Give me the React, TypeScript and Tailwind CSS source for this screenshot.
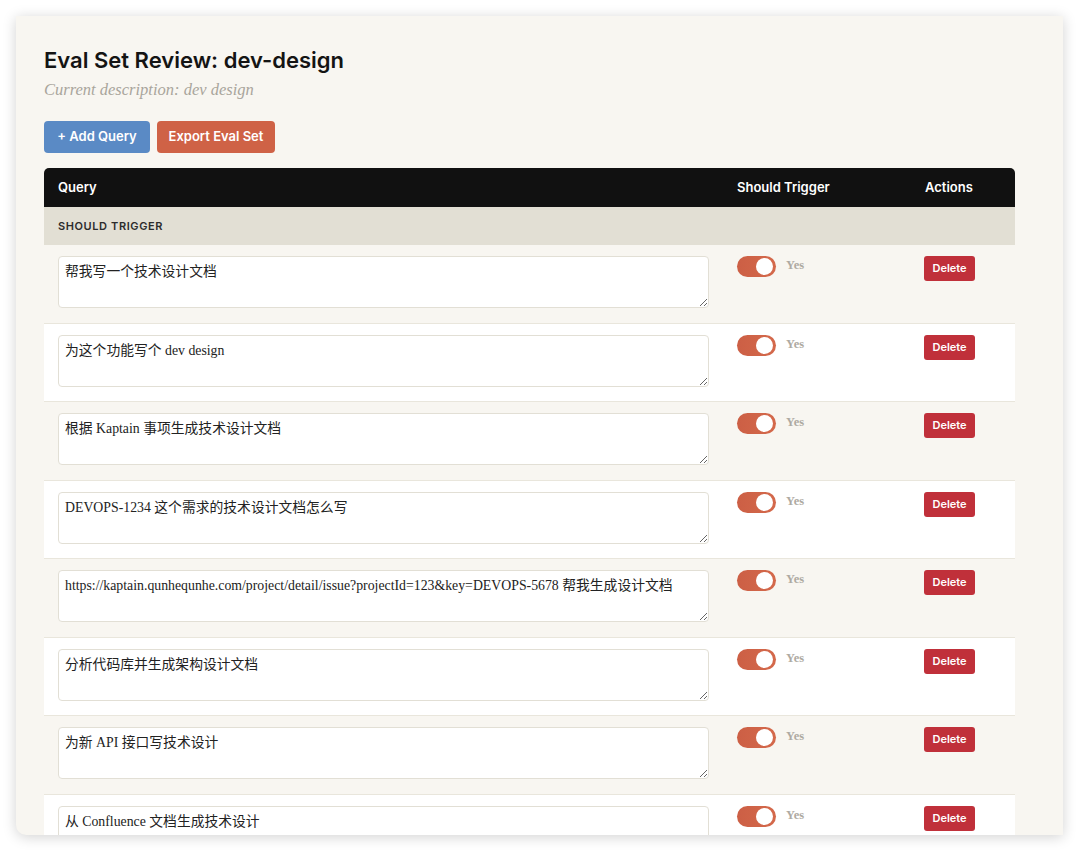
const queries = [
  "帮我写一个技术设计文档",
  "为这个功能写个 dev design",
  "根据 Kaptain 事项生成技术设计文档",
  "DEVOPS-1234 这个需求的技术设计文档怎么写",
  "https://kaptain.qunhequnhe.com/project/detail/issue?projectId=123&key=DEVOPS-5678 帮我生成设计文档",
  "分析代码库并生成架构设计文档",
  "为新 API 接口写技术设计",
  "从 Confluence 文档生成技术设计",
];

const sans = "font-['Inter','Noto_Sans',sans-serif]";
const serif = "font-['Liberation_Serif','Noto_Sans_CJK_SC',serif]";

function Toggle() {
  return (
    <div className="flex items-center gap-[10px]">
      <div className="relative w-[39px] h-[21px] rounded-full bg-gradient-to-r from-[#cc5f45] to-[#d4694b]">
        <div className="absolute right-[3px] top-[2px] w-[17px] h-[17px] rounded-full bg-white" />
      </div>
      <span className={`${serif} text-[12.5px] font-bold text-[#aeaaa2] -mt-[2px]`}>Yes</span>
    </div>
  );
}

function Row({ text, index }: { text: string; index: number }) {
  return (
    <div
      className={`flex border-b border-[#e9e6dc] ${index % 2 === 0 ? "bg-[#f8f6f1]" : "bg-white"}`}
    >
      <div className="w-[679px] pl-[14px] pr-[14px] pt-[11px] pb-[14.5px]">
        <textarea
          readOnly
          defaultValue={text}
          className={`${serif} block w-[651px] h-[52px] rounded-[4px] border border-[#e2dfd5] bg-white px-[6px] py-[5px] text-[13.8px] leading-[20px] text-[#222] resize-y outline-none`}
        />
      </div>
      <div className="w-[188px] pl-[14px] pt-[11px]">
        <Toggle />
      </div>
      <div className="w-[104px] pl-[13px] pt-[11px]">
        <button
          className={`${sans} block w-[51px] h-[25px] rounded-[3px] bg-[#c0303a] text-white text-[11px] font-semibold`}
        >
          Delete
        </button>
      </div>
    </div>
  );
}

export default function App() {
  return (
    <div className="w-[1080px] h-[851px] bg-white pl-[16px] pt-[16px]">
      <div className="relative w-[1047px] h-[819px] overflow-hidden bg-[#f8f6f1] shadow-[0_2px_14px_rgba(0,0,0,0.18)] rounded-bl-[10px] pl-[28px] pt-[28px]">
        <h1 className={`${sans} text-[22px] leading-[32px] font-semibold text-[#141414]`}>
          Eval Set Review: dev-design
        </h1>
        <p className={`${serif} italic text-[16.5px] leading-[22px] mt-[3px] text-[#a9a59c]`}>
          Current description: dev design
        </p>
        <div className="flex gap-[7px] mt-[20px]">
          <button
            className={`${sans} h-[32px] w-[106px] rounded-[4px] bg-[#5a8ac5] text-white text-[13px] font-semibold`}
          >
            + Add Query
          </button>
          <button
            className={`${sans} h-[32px] w-[118px] rounded-[4px] bg-[#cf6246] text-white text-[13px] font-semibold`}
          >
            Export Eval Set
          </button>
        </div>

        <div className="w-[971px] mt-[15px]">
          <div className={`${sans} flex h-[39px] items-center rounded-t-[5px] bg-[#111111] text-white text-[13px] font-semibold`}>
            <div className="w-[679px] pl-[14px]">Query</div>
            <div className="w-[188px] pl-[14px]">Should Trigger</div>
            <div className="w-[104px] pl-[14px]">Actions</div>
          </div>
          <div className={`${sans} flex h-[38px] items-center bg-[#e2dfd4] pl-[14px] text-[11px] font-semibold tracking-[0.6px] text-[#2c2c2c]`}>
            SHOULD TRIGGER
          </div>
          {queries.map((q, i) => (
            <Row key={i} text={q} index={i} />
          ))}
        </div>
      </div>
    </div>
  );
}
